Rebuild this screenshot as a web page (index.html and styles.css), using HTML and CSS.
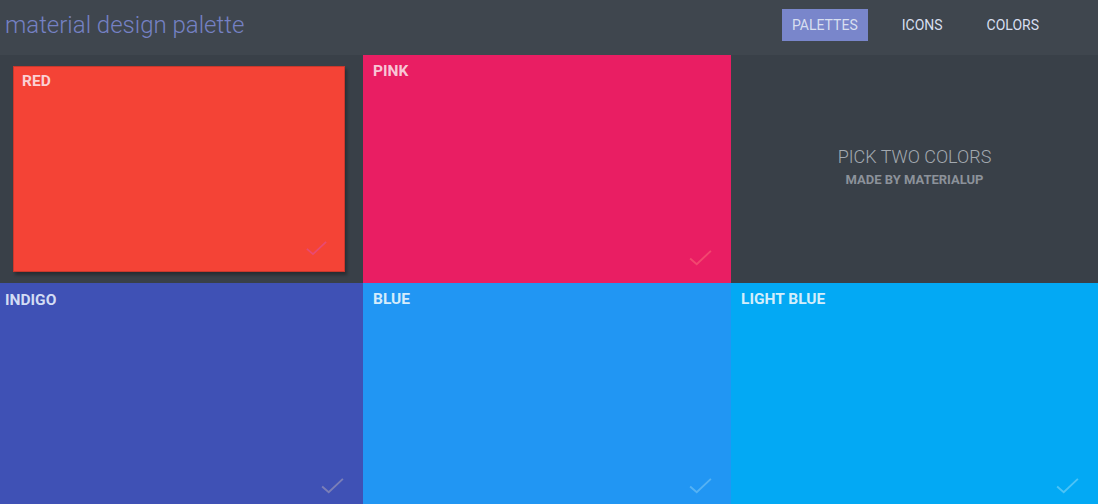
FILE: index.html
```html
<!DOCTYPE html>
<html lang="en">
<head>
    <meta charset="UTF-8">
    <meta name="viewport" content="width=device-width, initial-scale=1.0">
    <title>Material Design Palette</title>
    <link rel="stylesheet" href="styles.css">
</head>
<body>
    <header class="topbar">
        <div class="logo">material design palette</div>
        <nav class="nav">
            <a class="nav-item active">PALETTES</a>
            <a class="nav-item">ICONS</a>
            <a class="nav-item">COLORS</a>
        </nav>
    </header>

    <main class="grid">
        <div class="cell selected">
            <div class="swatch red">
                <span class="label">RED</span>
                <svg class="check" viewBox="0 0 24 18"><path d="M1 10 L8 16 L23 2"/></svg>
            </div>
        </div>
        <div class="cell">
            <div class="swatch pink">
                <span class="label">PINK</span>
                <svg class="check" viewBox="0 0 24 18"><path d="M1 10 L8 16 L23 2"/></svg>
            </div>
        </div>
        <div class="cell info">
            <div class="pick">PICK TWO COLORS</div>
            <div class="made">MADE BY MATERIALUP</div>
        </div>
        <div class="cell first">
            <div class="swatch indigo">
                <span class="label">INDIGO</span>
                <svg class="check" viewBox="0 0 24 18"><path d="M1 10 L8 16 L23 2"/></svg>
            </div>
        </div>
        <div class="cell">
            <div class="swatch blue">
                <span class="label">BLUE</span>
                <svg class="check" viewBox="0 0 24 18"><path d="M1 10 L8 16 L23 2"/></svg>
            </div>
        </div>
        <div class="cell">
            <div class="swatch light-blue">
                <span class="label">LIGHT BLUE</span>
                <svg class="check" viewBox="0 0 24 18"><path d="M1 10 L8 16 L23 2"/></svg>
            </div>
        </div>
    </main>
</body>
</html>
```

FILE: styles.css
```css
html, body {
    margin: 0;
    height: 100%;
    overflow: hidden;
}

body {
    font-family: Roboto, 'Noto Sans', sans-serif;
    background: #394048;
}

.topbar {
    height: 55px;
    background: #3f464e;
    display: flex;
    align-items: center;
    justify-content: space-between;
}

.logo {
    font-size: 24px;
    font-weight: 300;
    color: #7581c4;
    padding-left: 5px;
    margin-top: -6px;
}

.nav {
    display: flex;
    align-items: center;
    gap: 24px;
    padding-right: 49px;
    margin-top: -6px;
}

.nav-item {
    font-size: 14px;
    color: #d8dff0;
    padding: 8px 10px;
    line-height: 16px;
}

.nav-item.active {
    background: #7986cb;
}

.grid {
    display: grid;
    grid-template-columns: 363px 368px 1fr;
    grid-template-rows: 228px 228px;
}

.cell {
    display: flex;
}

.cell.selected {
    padding: 11px 18px 11px 13px;
}

.swatch {
    flex: 1;
    position: relative;
    padding: 9px 10px;
}

.cell.first .swatch {
    padding: 10px 5px;
}

.selected .swatch {
    border: 1px solid #c9382c;
    box-shadow: 2px 3px 3px rgba(0, 0, 0, 0.3);
    padding: 7px 8px;
}

.label {
    display: block;
    font-size: 15.5px;
    line-height: 15px;
    font-weight: 700;
    color: rgba(255, 255, 255, 0.8);
}

.check {
    position: absolute;
    right: 19px;
    bottom: 17px;
    width: 23px;
    height: 17px;
    fill: none;
    stroke-width: 2;
}

.selected .check {
    right: 17px;
    bottom: 15px;
    width: 21px;
    height: 16px;
}

.red { background: #f44336; }
.red .label { color: #fbd0d3; }
.red .check { stroke: #e84a72; }

.pink { background: #e91e63; }
.pink .label { color: #f8c6d6; }
.pink .check { stroke: #f2476f; }

.indigo { background: #3f51b5; }
.indigo .label { color: #d2dcf4; }
.indigo .check { stroke: #7b7fb7; }

.blue { background: #2196f3; }
.blue .label { color: #d5ecfb; }
.blue .check { stroke: #55b2f4; }

.light-blue { background: #03a9f4; }
.light-blue .label { color: #d3eefb; }
.light-blue .check { stroke: #4cc3f6; }

.info {
    flex-direction: column;
    align-items: center;
    justify-content: center;
    padding-bottom: 6px;
}

.pick {
    font-size: 18px;
    font-weight: 300;
    color: #a3a9b0;
}

.made {
    font-size: 13px;
    font-weight: 700;
    color: #8c929a;
    margin-top: 5px;
}
```
